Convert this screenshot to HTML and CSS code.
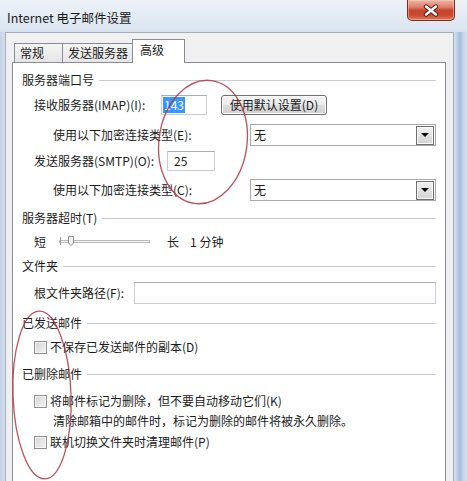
FILE: index.html
```html
<!DOCTYPE html>
<html lang="zh-CN">
<head>
<meta charset="utf-8">
<title>Internet 电子邮件设置</title>
<link rel="stylesheet" href="styles.css">
</head>
<body>
<div class="window">
  <div class="titlebar">
    <span class="title">Internet 电子邮件设置</span>
    <div class="close">
      <svg width="18" height="13" viewBox="0 0 18 13">
        <path d="M4 2.5 L14 10.5 M14 2.5 L4 10.5" stroke="#5b1d12" stroke-width="4.4" stroke-linecap="round" fill="none"/>
        <path d="M4 2.5 L14 10.5 M14 2.5 L4 10.5" stroke="#ffffff" stroke-width="2.4" stroke-linecap="round" fill="none"/>
      </svg>
    </div>
  </div>
  <div class="face">
    <div class="tabs">
      <div class="tab tab-general">常规</div>
      <div class="tab tab-send">发送服务器</div>
      <div class="tab tab-advanced active">高级</div>
    </div>
    <div class="panel">
      <div class="group">服务器端口号</div>
      <div class="row row-imap">
        <span class="label lvl1 w-imap">接收服务器(IMAP)(I):</span>
        <span class="input in-imap"><span class="selected">143</span></span>
        <span class="button">使用默认设置(D)</span>
      </div>
      <div class="row row-enc1">
        <span class="label lvl2 w-enc">使用以下加密连接类型(E):</span>
        <span class="select"><span class="value">无</span><span class="drop"><span class="tri"></span></span></span>
      </div>
      <div class="row row-smtp">
        <span class="label lvl1 w-smtp">发送服务器(SMTP)(O):</span>
        <span class="input in-smtp">25</span>
      </div>
      <div class="row row-enc2">
        <span class="label lvl2 w-enc">使用以下加密连接类型(C):</span>
        <span class="select"><span class="value">无</span><span class="drop"><span class="tri"></span></span></span>
      </div>
      <div class="group group-timeout">服务器超时(T)</div>
      <div class="row row-slider">
        <span class="label lvl1">短</span>
        <svg class="slider" width="96" height="16" viewBox="0 0 96 16">
          <rect x="1.5" y="6.5" width="90" height="2" fill="#f6f6f6" stroke="#b9b9b9"/>
          <path d="M2.5 3 V11" stroke="#9a9a9a" stroke-width="1"/>
          <path d="M10.5 2.5 H15.5 V9 L13 11.5 L10.5 9 Z" fill="#f2f2f2" stroke="#8c8c8c"/>
        </svg>
        <span class="long">长</span>
        <span class="minutes">1 分钟</span>
      </div>
      <div class="group group-folder">文件夹</div>
      <div class="row row-folder">
        <span class="label lvl1 w-folder">根文件夹路径(F):</span>
        <span class="input in-folder"></span>
      </div>
      <div class="group group-sent">已发送邮件</div>
      <div class="row row-cb1">
        <span class="checkbox lvl1"></span>
        <span class="label">不保存已发送邮件的副本(D)</span>
      </div>
      <div class="group group-deleted">已删除邮件</div>
      <div class="row row-cb2">
        <span class="checkbox lvl1"></span>
        <span class="label">将邮件标记为删除，但不要自动移动它们(K)</span>
      </div>
      <div class="row row-note">
        <span class="label lvl2">清除邮箱中的邮件时，标记为删除的邮件将被永久删除。</span>
      </div>
      <div class="row row-cb3">
        <span class="checkbox lvl1"></span>
        <span class="label">联机切换文件夹时清理邮件(P)</span>
      </div>
    </div>
  </div>
</div>
<svg class="annotations" width="467" height="481" viewBox="0 0 467 481">
  <ellipse cx="203" cy="142" rx="44" ry="62" transform="rotate(8 203 142)" fill="none" stroke="#b3313f" stroke-width="1.3" opacity="0.85"/>
  <ellipse cx="42" cy="395" rx="29" ry="84" transform="rotate(-2 42 395)" fill="none" stroke="#b3313f" stroke-width="1.3" opacity="0.85"/>
</svg>
</body>
</html>
```

FILE: styles.css
```css
* { box-sizing: border-box; }
html, body { margin: 0; padding: 0; }
body {
  width: 467px;
  height: 481px;
  overflow: hidden;
  position: relative;
  font-family: "Noto Sans CJK SC", "Microsoft YaHei", sans-serif;
  font-size: 12px;
  line-height: 16px;
  color: #1b1b1b;
  background: linear-gradient(to right, #c3d2e4 0, #d3dfed 5px, #d8e3f0 454px, #bccfe4 457px, #a4bcd8 460px, #c3d3e6 463px, #d4e0ee 467px);
}
.window { display: flex; flex-direction: column; height: 481px; }

.titlebar {
  height: 32px;
  flex: none;
  display: flex;
  justify-content: space-between;
  align-items: flex-start;
  background: linear-gradient(#edf2f8, #dae4f0);
}
.title { margin: 10px 0 0 7px; font-size: 12.5px; line-height: 16px; color: #1a1a1a; }
.close {
  width: 48px;
  height: 21px;
  margin-right: 12px;
  border: 1px solid #7e2b1f;
  border-top: none;
  border-radius: 0 0 5px 5px;
  background: linear-gradient(#edb6a7 0, #de806b 35%, #c8432c 52%, #c84a30 75%, #de7a5c 100%);
  box-shadow: inset 0 0 0 1px rgba(255, 215, 200, 0.45);
  display: flex;
  align-items: center;
  justify-content: center;
}

.face {
  flex: 1;
  margin-left: 5px;
  width: 449px;
  border: 1px solid #a3aebc;
  border-bottom: none;
  background: #f0f0f0;
  padding: 6px 7px 0 6px;
  display: flex;
  flex-direction: column;
}

.tabs { display: flex; align-items: flex-end; height: 23px; padding-left: 2px; flex: none; }
.tab {
  height: 19px;
  border: 1px solid #898c95;
  border-bottom: none;
  background: linear-gradient(#f4f4f4, #e6e6e6);
  padding: 1px 0 0 5px;
  line-height: 16px;
  white-space: nowrap;
}
.tab-general { width: 49px; }
.tab-send { width: 71px; margin-left: -1px; }
.tab-advanced { width: 53px; margin-left: -1px; padding-left: 7px; }
.tab.active {
  height: 24px;
  margin-bottom: -1px;
  background: #ffffff;
  padding-top: 2px;
  position: relative;
  z-index: 1;
}

.panel {
  flex: 1;
  background: #ffffff;
  border: 1px solid #898c95;
  border-bottom: none;
  padding: 9px 9px 0 9px;
}

.group { display: flex; align-items: center; height: 16px; white-space: nowrap; }
.group::after { content: ""; flex: 1; margin-left: 5px; border-top: 1px solid #c6ccd4; }
.group-timeout { margin-top: 9px; }
.group-folder { margin-top: 8px; }
.group-sent { margin-top: 11px; }
.group-deleted { margin-top: 11px; }

.row { display: flex; align-items: center; white-space: nowrap; }
.row-imap { margin-top: 7px; height: 20px; }
.row-enc1 { margin-top: 9px; height: 22px; }
.row-smtp { margin-top: 5px; height: 20px; }
.row-enc2 { margin-top: 8px; height: 22px; }
.row-slider { margin-top: 8px; height: 16px; }
.row-folder { margin-top: 8px; height: 22px; }
.row-cb1 { margin-top: 8px; height: 16px; }
.row-cb2 { margin-top: 11px; height: 16px; }
.row-note { margin-top: 4px; height: 16px; }
.row-cb3 { margin-top: 5px; height: 16px; }

.lvl1 { margin-left: 12px; }
.lvl2 { margin-left: 31px; }
.w-imap { width: 127px; flex: none; }
.w-smtp { width: 133px; flex: none; }
.w-enc { width: 197px; flex: none; }
.w-folder { width: 100px; flex: none; }

.input {
  height: 20px;
  border: 1px solid #c9cdd4;
  border-top-color: #a9adb5;
  background: #fff;
  display: flex;
  align-items: center;
  flex: none;
}
.in-imap { width: 46px; padding-left: 1px; }
.in-smtp { width: 48px; padding-left: 6px; }
.in-folder { width: 302px; height: 22px; }
.selected { background: #3399ff; color: #fff; padding: 0 1px; line-height: 16px; }

.button {
  margin-left: 14px;
  width: 106px;
  height: 20px;
  border: 1px solid #707070;
  border-radius: 3px;
  background: linear-gradient(#f3f3f3 0, #ebebeb 50%, #dddddd 51%, #d0d0d0 100%);
  box-shadow: inset 0 0 0 1px #fcfcfc;
  display: flex;
  align-items: center;
  justify-content: center;
  flex: none;
}

.select {
  width: 186px;
  height: 22px;
  border: 1px solid #a9a9a9;
  background: #fff;
  display: flex;
  align-items: center;
  justify-content: space-between;
  padding: 0 1px 0 3px;
  flex: none;
}
.drop {
  width: 18px;
  height: 19px;
  border: 1px solid #6f6f6f;
  background: linear-gradient(#f1f1f1, #d3d3d3);
  box-shadow: inset 0 0 0 1px #fafafa;
  display: flex;
  align-items: center;
  justify-content: center;
}
.tri { width: 0; height: 0; border-left: 4px solid transparent; border-right: 4px solid transparent; border-top: 4px solid #000; }

.slider { margin-left: 12px; flex: none; }
.long { margin-left: 13px; }
.minutes { margin-left: 11px; }

.checkbox {
  width: 13px;
  height: 13px;
  flex: none;
  margin-right: 3px;
  border: 1px solid #8e8f8f;
  background: linear-gradient(135deg, #d4d4d4, #f4f4f4);
  box-shadow: inset 0 0 0 1px #f5f5f5;
}

.annotations { position: absolute; left: 0; top: 0; pointer-events: none; }
```
